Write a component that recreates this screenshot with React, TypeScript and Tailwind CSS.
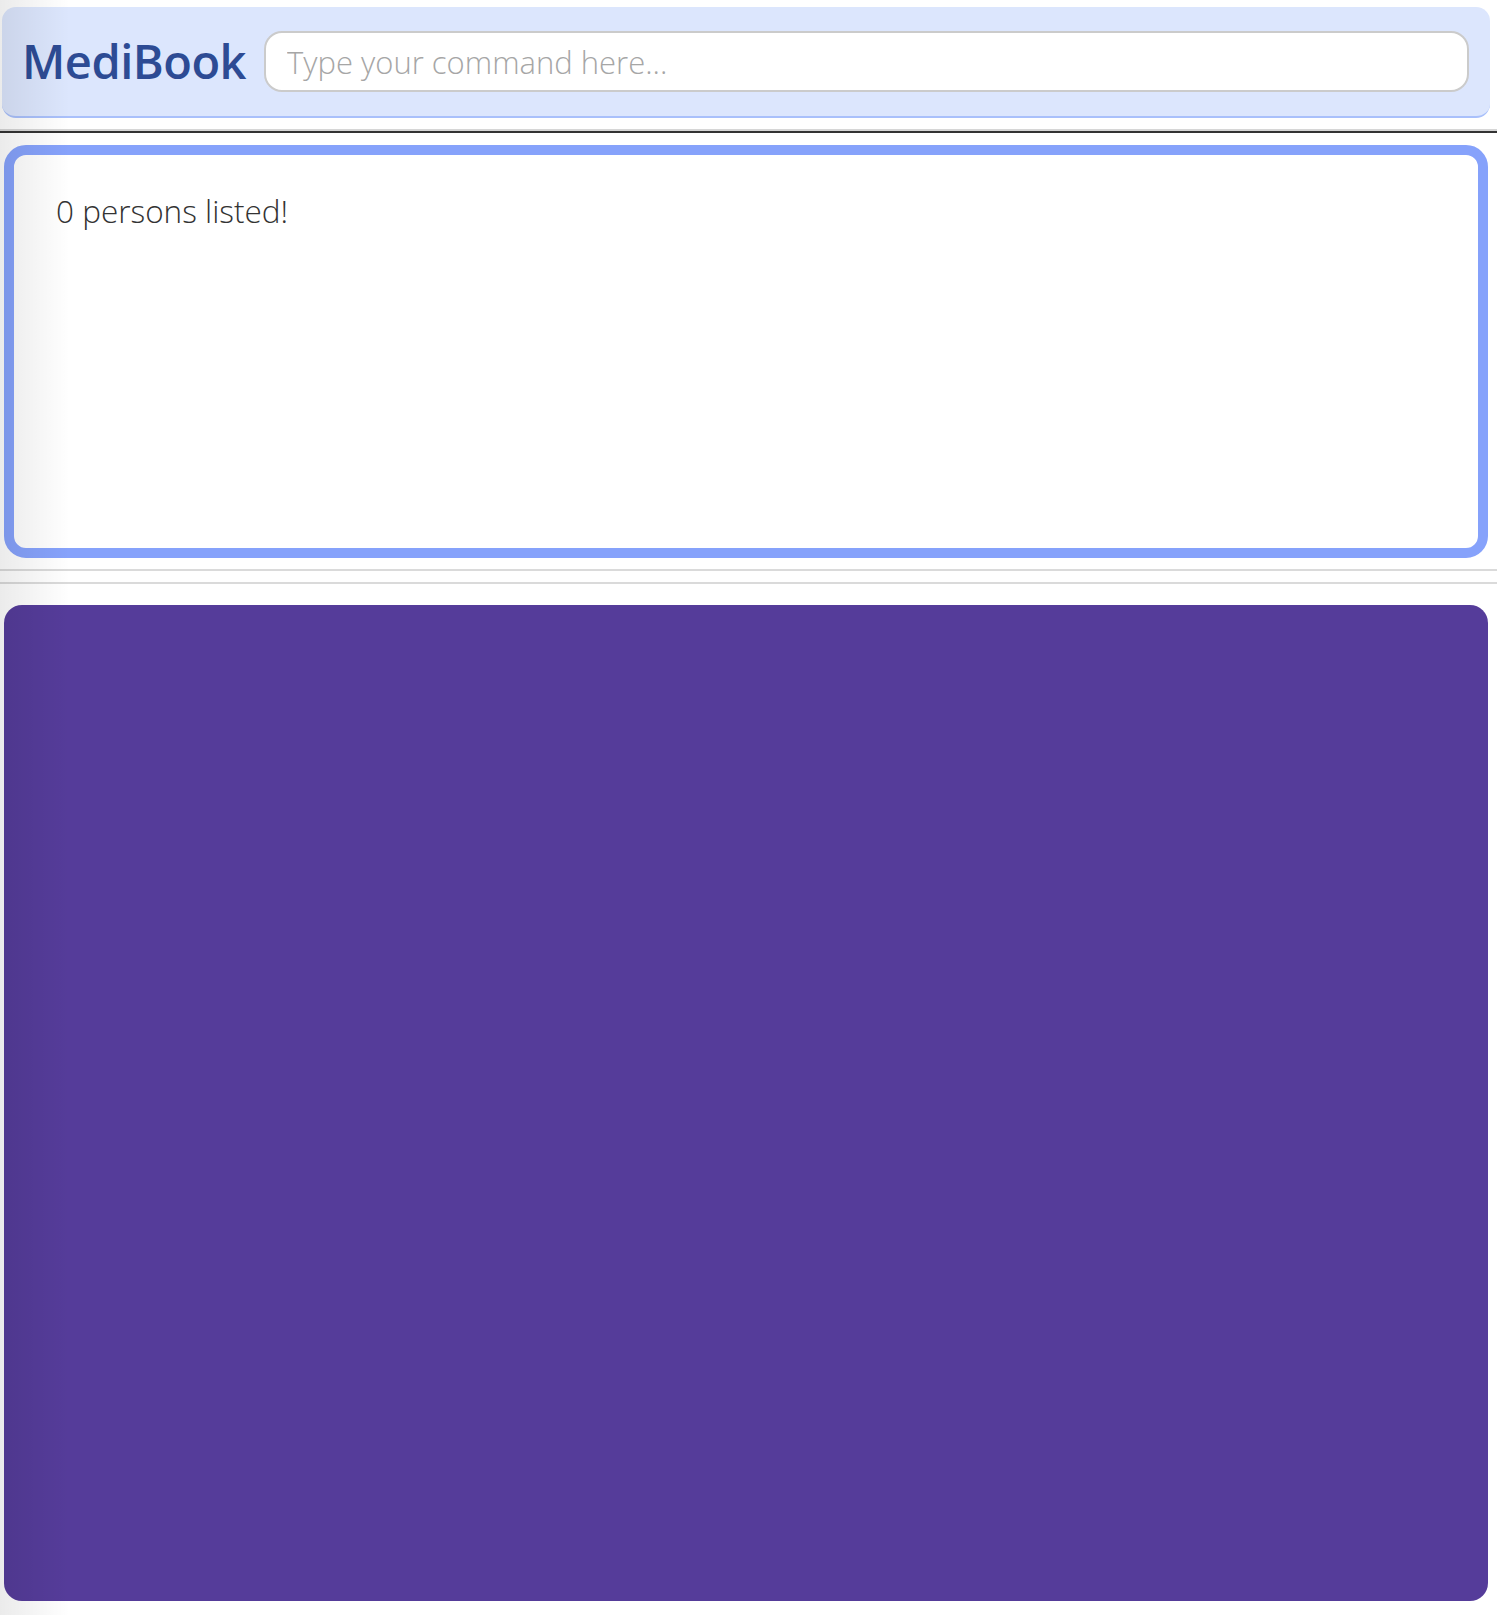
export default function App() {
  return (
    <div
      className="relative flex h-[1615px] flex-col bg-white"
      style={{ fontFamily: '"Open Sans", "Noto Sans", sans-serif' }}
    >
      {/* Command bar */}
      <div className="mt-[7px] ml-[2px] mr-[7px] flex h-[111px] items-center rounded-[14px] border-b-2 border-[#a9c0fb] bg-[#dce6fd] pl-[20px] pr-[21px]">
        <h1 className="text-[47px] font-semibold tracking-[-0.5px] text-[#2d4b94]">MediBook</h1>
        <input
          className="ml-[18px] h-[61px] flex-1 rounded-[18px] border-2 border-[#cbcbcb] bg-white px-[21px] text-[31px] font-light text-[#333] outline-none placeholder:text-[#a6a6a6]"
          placeholder="Type your command here..."
        />
      </div>

      {/* Separator */}
      <div className="mt-[11px] h-[2px] bg-[#d6d6d6]" />
      <div className="h-[2px] bg-[#333333]" />

      {/* Person list */}
      <div className="ml-[4px] mr-[9px] mt-[12px] h-[413px] rounded-[22px] border-[10px] border-[#86a2fb] bg-white px-[42px] pt-[32px]">
        <p className="text-[31.5px] font-light text-[#333]">0 persons listed!</p>
      </div>

      {/* Result dividers */}
      <div className="mt-[11px] h-[2px] bg-[#dadada]" />
      <div className="mt-[11px] h-[2px] bg-[#dadada]" />

      {/* Result display */}
      <div className="mb-[14px] ml-[4px] mr-[9px] mt-[21px] flex-1 rounded-[18px] bg-[#553c9a]" />

      {/* window edge shading */}
      <div className="pointer-events-none absolute inset-y-0 left-0 w-[70px] bg-[linear-gradient(to_right,rgba(0,0,0,0.08),rgba(0,0,0,0))]" />
    </div>
  )
}
